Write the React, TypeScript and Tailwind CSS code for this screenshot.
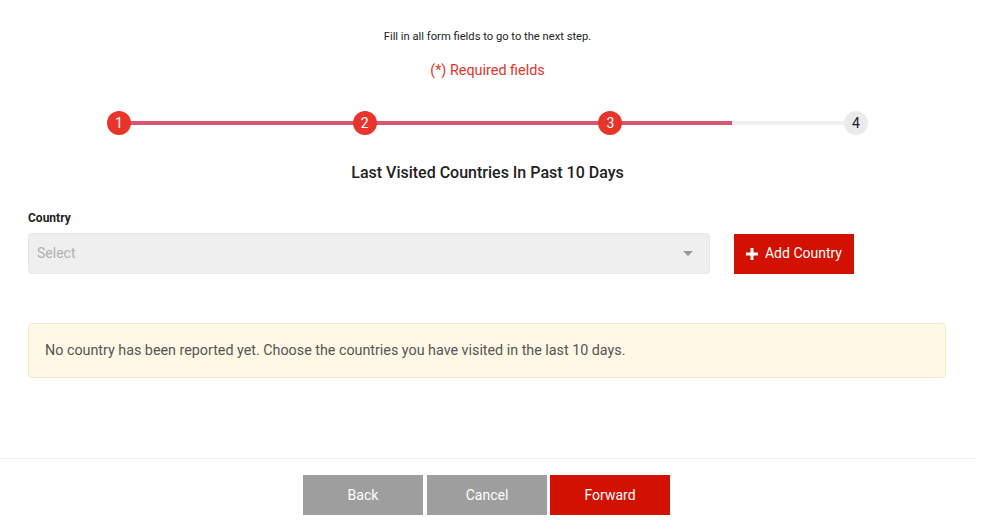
import React from 'react'

const steps = [1, 2, 3, 4]

const Stepper: React.FC<{ current: number }> = ({ current }) => (
  <div className="relative mx-auto w-[761px] h-6">
    <div className="absolute left-3 right-3 top-[10px] h-1 bg-[#f0f0f0]" />
    <div className="absolute left-3 top-[10px] h-1 w-[613px] bg-[#d9546e]" />
    <div className="relative flex justify-between">
      {steps.map(n => (
        <div
          key={n}
          className={`w-6 h-6 rounded-full flex items-center justify-center text-[14px] ${
            n <= current ? 'bg-[#e8352b] text-white' : 'bg-[#ebebeb] text-[#1a1a3a]'
          }`}
        >
          {n}
        </div>
      ))}
    </div>
  </div>
)

export default function App() {
  return (
    <div className="w-[975px] min-h-[529px] bg-white font-['Roboto',sans-serif] text-[#212121]">
      <div className="pt-[29px] text-center text-[11.2px] text-[#222]">Fill in all form fields to go to the next step.</div>
      <div className="mt-[14px] text-center text-[14.4px] text-[#e0352b]">(*) Required fields</div>

      <div className="mt-[30px]">
        <Stepper current={3} />
      </div>

      <h2 className="mt-[26px] text-center text-[16px] font-medium text-[#222]">Last Visited Countries In Past 10 Days</h2>

      <div className="px-[28px] mt-[24px]">
        <label className="block text-[12px] font-bold text-[#222]">Country</label>
        <div className="mt-[6px] flex items-center gap-6">
          <div className="w-[682px] h-[41px] rounded bg-[#efefef] border border-[#e6e6e6] flex items-center justify-between pl-2 pr-4">
            <span className="text-[14px] text-[#b0b0b0]">Select</span>
            <span className="w-0 h-0 border-l-[5px] border-r-[5px] border-t-[5px] border-l-transparent border-r-transparent border-t-[#999]" />
          </div>
          <button className="w-[120px] h-10 bg-[#d21100] text-white text-[14px] flex items-center justify-center gap-[7px]">
            <svg width="12" height="12" viewBox="0 0 12 12">
              <path d="M6 0v12M0 6h12" stroke="white" strokeWidth="3" />
            </svg>
            Add Country
          </button>
        </div>

        <div className="mt-[49px] w-[918px] h-[55px] rounded border border-[#f3e8c8] bg-[#fff8e5] flex items-center px-4">
          <span className="text-[14.3px] text-[#555]">No country has been reported yet. Choose the countries you have visited in the last 10 days.</span>
        </div>
      </div>

      <div className="mt-[80px] border-t border-[#eeeeee] flex justify-center pt-4">
        <div className="flex gap-1 ml-[-2px]">
          <button className="w-[120px] h-10 bg-[#9e9e9e] text-white text-[14px]">Back</button>
          <button className="w-[120px] h-10 bg-[#9e9e9e] text-white text-[14px]">Cancel</button>
          <button className="w-[120px] h-10 bg-[#d21100] text-white text-[14px] -ml-[1px]">Forward</button>
        </div>
      </div>
    </div>
  )
}
